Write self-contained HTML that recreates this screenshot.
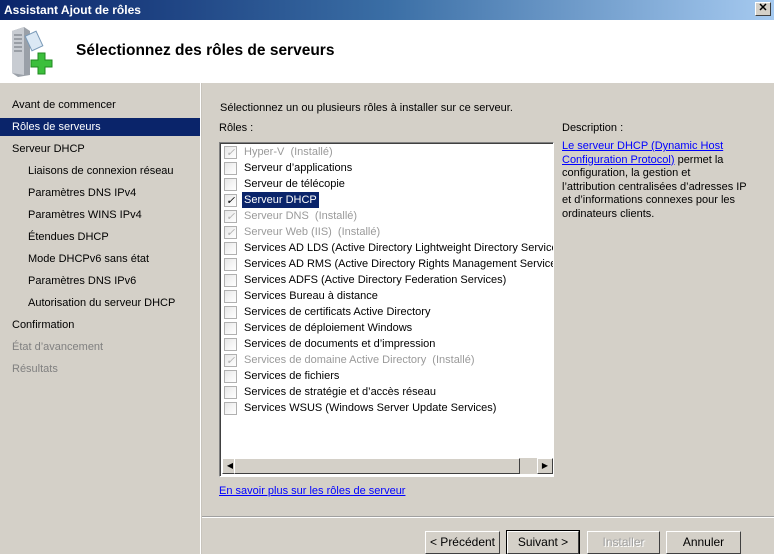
<!DOCTYPE html><html><head><style>
*{margin:0;padding:0;box-sizing:border-box}
body{width:774px;height:554px;overflow:hidden;background:#d4d0c8;font-family:"Liberation Sans",sans-serif;font-size:11px;color:#000;position:relative}
.abs{position:absolute}
.title{left:0;top:0;width:774px;height:20px;background:linear-gradient(90deg,#0a246a,#3a6ea5 50%,#a6caf0);color:#fff;font-weight:bold;font-size:12px;padding:3px 4px}
.close{right:3px;top:2px;width:16px;height:14px;background:#d4d0c8;border:1px solid;border-color:#fff #404040 #404040 #fff;font-size:11px;line-height:11px;text-align:center;color:#000;font-weight:bold}
.hdr{left:0;top:20px;width:774px;height:63px;background:#fff}
.h1{left:76px;top:42px;font-size:15.5px;font-weight:bold}
.nav{left:0;top:83px;width:200px;height:471px}
.nav div{position:absolute;left:12px;height:18px;line-height:18px;white-space:nowrap}
.nav .sub{left:28px}
.nav .sel{left:0;width:200px;padding-left:12px;background:#0a246a;color:#fff}
.nav .dis{color:#808080}
.vsep{left:200px;top:83px;width:2px;height:471px;border-left:1px solid #fff;border-right:1px solid #c8c4bc}
.list{left:219px;top:142px;width:335px;height:335px;background:#fff;border:1px solid;border-color:#808080 #fff #fff #808080;box-shadow:inset 1px 1px 0 #404040;overflow:hidden}
.it{position:absolute;left:4px;height:16px;white-space:nowrap;line-height:16px}
.cb{position:absolute;left:0;top:2px;width:13px;height:13px;border:1px solid #b0b0b0;background:linear-gradient(135deg,#e8e8e8,#fff)}
.it span{position:absolute;left:18px;padding:0 2px}
.g{color:#9a9a9a}
.ck::after{content:"✓";position:absolute;left:1px;top:-2px;font-size:11px}
.g .ck::after{color:#b0b0b0}
.hs{left:2px;bottom:2px;width:331px;height:16px;background:#d4d0c8}
.sb{position:absolute;top:0;width:16px;height:16px;background:#d4d0c8;border:1px solid;border-color:#fff #404040 #404040 #fff;font-size:8px;text-align:center;line-height:14px}
a{color:#0000ff;text-decoration:underline}
.btn{top:531px;height:23px;background:#d4d0c8;border:1px solid;border-color:#fff #404040 #404040 #fff;text-align:center;line-height:21px;font-size:12px}
</style></head><body>
<div class="abs title">Assistant Ajout de rôles</div>
<div class="abs close">✕</div>
<div class="abs hdr"></div>
<svg class="abs" style="left:8px;top:25px" width="52" height="54" viewBox="0 0 52 54">
<path d="M4 6 L16 2 L22 6 L22 50 L10 52 L4 48Z" fill="#9aa0a8"/><path d="M4 6 L16 2 L16 50 L4 48Z" fill="#c8ccd2"/>
<path d="M6 10h8M6 14h8M6 18h8M6 22h8M6 26h8" stroke="#6a7078" stroke-width="1"/>
<rect x="20" y="8" width="12" height="16" transform="rotate(-25 26 16)" fill="#dbe8f4" stroke="#7a9ab8"/>
<path d="M30 28h7v7h7v7h-7v7h-7v-7h-7v-7h7z" fill="#3cbf3c" stroke="#1f8a1f"/></svg>
<div class="abs h1">Sélectionnez des rôles de serveurs</div>
<div class="abs nav">
<div style="top:13px">Avant de commencer</div>
<div class="sel" style="top:35px">Rôles de serveurs</div>
<div style="top:57px">Serveur DHCP</div>
<div class="sub" style="top:79px">Liaisons de connexion réseau</div>
<div class="sub" style="top:101px">Paramètres DNS IPv4</div>
<div class="sub" style="top:123px">Paramètres WINS IPv4</div>
<div class="sub" style="top:145px">Étendues DHCP</div>
<div class="sub" style="top:167px">Mode DHCPv6 sans état</div>
<div class="sub" style="top:189px">Paramètres DNS IPv6</div>
<div class="sub" style="top:211px">Autorisation du serveur DHCP</div>
<div style="top:233px">Confirmation</div>
<div class="dis" style="top:255px">État d’avancement</div>
<div class="dis" style="top:277px">Résultats</div>
</div>
<div class="abs vsep"></div>
<div class="abs" style="left:220px;top:102px">Sélectionnez un ou plusieurs rôles à installer sur ce serveur.</div>
<div class="abs" style="left:219px;top:122px">Rôles :</div>
<div class="abs list">
<div class="it g" style="top:1px"><i class="cb ck"></i><span>Hyper-V&nbsp; (Installé)</span></div>
<div class="it" style="top:17px"><i class="cb"></i><span>Serveur d’applications</span></div>
<div class="it" style="top:33px"><i class="cb"></i><span>Serveur de télécopie</span></div>
<div class="it" style="top:49px"><i class="cb ck"></i><span style="background:#0a246a;color:#fff">Serveur DHCP</span></div>
<div class="it g" style="top:65px"><i class="cb ck"></i><span>Serveur DNS&nbsp; (Installé)</span></div>
<div class="it g" style="top:81px"><i class="cb ck"></i><span>Serveur Web (IIS)&nbsp; (Installé)</span></div>
<div class="it" style="top:97px"><i class="cb"></i><span>Services AD LDS (Active Directory Lightweight Directory Services</span></div>
<div class="it" style="top:113px"><i class="cb"></i><span>Services AD RMS (Active Directory Rights Management Services)</span></div>
<div class="it" style="top:129px"><i class="cb"></i><span>Services ADFS (Active Directory Federation Services)</span></div>
<div class="it" style="top:145px"><i class="cb"></i><span>Services Bureau à distance</span></div>
<div class="it" style="top:161px"><i class="cb"></i><span>Services de certificats Active Directory</span></div>
<div class="it" style="top:177px"><i class="cb"></i><span>Services de déploiement Windows</span></div>
<div class="it" style="top:193px"><i class="cb"></i><span>Services de documents et d’impression</span></div>
<div class="it g" style="top:209px"><i class="cb ck"></i><span>Services de domaine Active Directory&nbsp; (Installé)</span></div>
<div class="it" style="top:225px"><i class="cb"></i><span>Services de fichiers</span></div>
<div class="it" style="top:241px"><i class="cb"></i><span>Services de stratégie et d’accès réseau</span></div>
<div class="it" style="top:257px"><i class="cb"></i><span>Services WSUS (Windows Server Update Services)</span></div>
<div class="abs hs"><div class="sb" style="left:0">◀</div><div class="sb" style="left:12px;width:286px"></div><div class="sb" style="right:0">▶</div></div>
</div>
<div class="abs" style="left:219px;top:485px"><a>En savoir plus sur les rôles de serveur</a></div>
<div class="abs" style="left:562px;top:122px">Description :</div>
<div class="abs" style="left:562px;top:140px;width:212px;line-height:13.5px;font-size:11px;white-space:nowrap"><a>Le serveur DHCP (Dynamic Host<br>Configuration Protocol)</a> permet la<br>configuration, la gestion et<br>l’attribution centralisées d’adresses IP<br>et d’informations connexes pour les<br>ordinateurs clients.</div>
<div class="abs" style="left:202px;top:516px;width:572px;height:2px;border-top:1px solid #a0a0a0;border-bottom:1px solid #fff"></div>
<div class="abs btn" style="left:425px;width:75px">&lt; Précédent</div>
<div class="abs btn" style="left:507px;width:72px;outline:1px solid #000">Suivant &gt;</div>
<div class="abs btn" style="left:587px;width:73px;color:#a0a0a0;text-shadow:1px 1px #fff">Installer</div>
<div class="abs btn" style="left:666px;width:75px">Annuler</div>
</body></html>
